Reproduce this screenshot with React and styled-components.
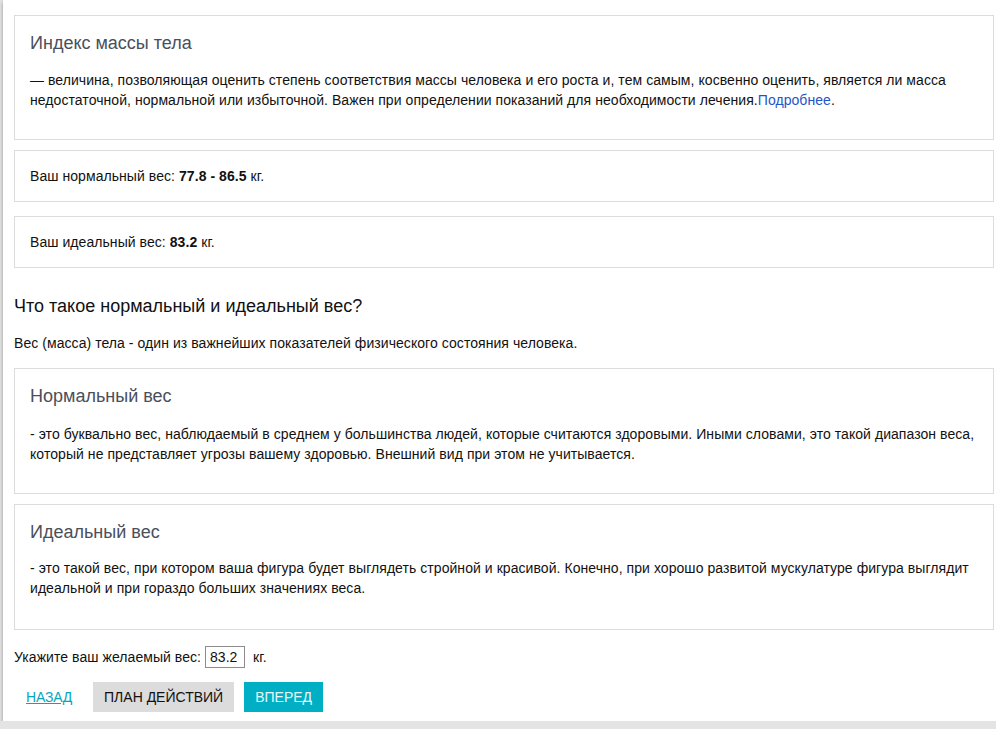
import React, { useState } from "react";
import styled, { createGlobalStyle } from "styled-components";

const Global = createGlobalStyle`
  html, body {
    margin: 0;
    padding: 0;
    background: #e4e4e4;
    font-family: "Liberation Sans", Arial, sans-serif;
    color: #111;
  }
`;

const Page = styled.div`
  margin-left: 3px;
  width: 993px;
  height: 721px;
  box-sizing: border-box;
  padding: 15px 2px 0 11px;
  background: #fff;
  box-shadow: 0 2px 4px rgba(0, 0, 0, 0.35);
  overflow: hidden;
  letter-spacing: 0.06px;
`;

const Card = styled.div`
  border: 1px solid #dcdcdc;
  padding: 14px 15px ${(p) => p.$bottom || 29}px;
  margin-bottom: ${(p) => p.$gap || 0}px;
  font-size: 14px;
  line-height: 20px;
`;

const PlainCard = styled(Card)`
  padding: 15px;
`;

const CardTitle = styled.div`
  font-size: 18px;
  line-height: 26px;
  color: #4a4f5c;
  letter-spacing: 0;
  margin-bottom: ${(p) => p.$mb || 14}px;
`;

const Text = styled.p`
  margin: 0;
  font-size: 14px;
  line-height: 20px;
`;

const Link = styled.a`
  color: #1f55c8;
  text-decoration: none;
`;

const Heading = styled.h2`
  margin: 25px 0 0;
  font-size: 18px;
  font-weight: normal;
  line-height: 26px;
  letter-spacing: 0;
  color: #111;
`;

const Lead = styled.p`
  margin: 14px 0 15px;
  font-size: 14px;
  line-height: 20px;
`;

const InputRow = styled.div`
  display: flex;
  align-items: center;
  gap: 4px;
  font-size: 14px;
  height: 24px;
  margin-top: 15px;
`;

const WeightInput = styled.input`
  width: 40px;
  height: 22px;
  box-sizing: border-box;
  border: 1px solid #8c8c8c;
  padding: 0 4px;
  margin-right: 4px;
  font-family: "Liberation Sans", Arial, sans-serif;
  font-size: 14px;
  color: #111;
  outline: none;
`;

const Actions = styled.div`
  display: flex;
  align-items: center;
  margin-top: 13px;
`;

const BackLink = styled.a`
  color: #0aa5bd;
  text-decoration: underline;
  text-transform: uppercase;
  letter-spacing: -0.2px;
  font-size: 14px;
  margin: 0 21px 0 12px;
  cursor: pointer;
`;

const Button = styled.button`
  height: 30px;
  border: none;
  padding: 0 11px;
  margin-right: 10px;
  font-family: "Liberation Sans", Arial, sans-serif;
  font-size: 14px;
  letter-spacing: 0;
  text-transform: uppercase;
  cursor: pointer;
  background: ${(p) => (p.$primary ? "#00afc3" : "#dcdcdc")};
  color: ${(p) => (p.$primary ? "#e6f9fc" : "#111")};
`;

export default function App() {
  const [weight, setWeight] = useState("83.2");

  return (
    <>
      <Global />
      <Page>
        <Card $gap={10}>
          <CardTitle $mb={14}>Индекс массы тела</CardTitle>
          <Text>
            — величина, позволяющая оценить степень соответствия массы человека и его роста и, тем
            самым, косвенно оценить, является ли масса недостаточной, нормальной или избыточной.
            Важен при определении показаний для необходимости лечения.
            <Link href="#">Подробнее</Link>.
          </Text>
        </Card>

        <PlainCard $gap={14}>
          <Text>
            Ваш нормальный вес: <b>77.8 - 86.5</b> кг.
          </Text>
        </PlainCard>

        <PlainCard>
          <Text>
            Ваш идеальный вес: <b>83.2</b> кг.
          </Text>
        </PlainCard>

        <Heading>Что такое нормальный и идеальный вес?</Heading>
        <Lead>Вес (масса) тела - один из важнейших показателей физического состояния человека.</Lead>

        <Card $gap={10}>
          <CardTitle $mb={15}>Нормальный вес</CardTitle>
          <Text>
            - это буквально вес, наблюдаемый в среднем у большинства людей, которые считаются
            здоровыми. Иными словами, это такой диапазон веса, который не представляет угрозы вашему
            здоровью. Внешний вид при этом не учитывается.
          </Text>
        </Card>

        <Card $bottom={31}>
          <CardTitle $mb={13}>Идеальный вес</CardTitle>
          <Text>
            - это такой вес, при котором ваша фигура будет выглядеть стройной и красивой. Конечно,
            при хорошо развитой мускулатуре фигура выглядит идеальной и при гораздо больших
            значениях веса.
          </Text>
        </Card>

        <InputRow>
          Укажите ваш желаемый вес:
          <WeightInput value={weight} onChange={(e) => setWeight(e.target.value)} />
          кг.
        </InputRow>

        <Actions>
          <BackLink>Назад</BackLink>
          <Button>План действий</Button>
          <Button $primary>Вперед</Button>
        </Actions>
      </Page>
    </>
  );
}
